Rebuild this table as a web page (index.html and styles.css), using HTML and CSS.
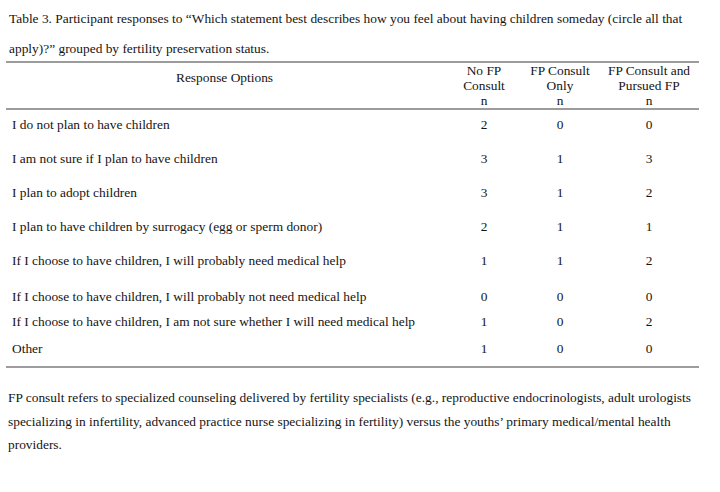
FILE: index.html
```html
<!DOCTYPE html>
<html lang="en">
<head>
<meta charset="utf-8">
<title>Table 3</title>
<link rel="stylesheet" href="styles.css">
</head>
<body>
<div class="page">
  <p class="caption">Table 3. Participant responses to “Which statement best describes how you feel about having children someday (circle all that apply)?” grouped by fertility preservation status.</p>
  <table class="data">
    <thead>
      <tr>
        <th class="opt-head">Response Options</th>
        <th class="num c2">No FP<br>Consult<br>n</th>
        <th class="num c3">FP Consult<br>Only<br>n</th>
        <th class="num c4">FP Consult and<br>Pursued FP<br>n</th>
      </tr>
    </thead>
    <tbody>
      <tr class="r-first"><td class="opt">I do not plan to have children</td><td class="num c2">2</td><td class="num c3">0</td><td class="num c4">0</td></tr>
      <tr class="r-std"><td class="opt">I am not sure if I plan to have children</td><td class="num c2">3</td><td class="num c3">1</td><td class="num c4">3</td></tr>
      <tr class="r-std"><td class="opt">I plan to adopt children</td><td class="num c2">3</td><td class="num c3">1</td><td class="num c4">2</td></tr>
      <tr class="r-std"><td class="opt">I plan to have children by surrogacy (egg or sperm donor)</td><td class="num c2">2</td><td class="num c3">1</td><td class="num c4">1</td></tr>
      <tr class="r-wide"><td class="opt">If I choose to have children, I will probably need medical help</td><td class="num c2">1</td><td class="num c3">1</td><td class="num c4">2</td></tr>
      <tr class="r-short"><td class="opt">If I choose to have children, I will probably not need medical help</td><td class="num c2">0</td><td class="num c3">0</td><td class="num c4">0</td></tr>
      <tr class="r-mid"><td class="opt">If I choose to have children, I am not sure whether I will need medical help</td><td class="num c2">1</td><td class="num c3">0</td><td class="num c4">2</td></tr>
      <tr class="r-mid"><td class="opt">Other</td><td class="num c2">1</td><td class="num c3">0</td><td class="num c4">0</td></tr>
    </tbody>
  </table>
  <p class="note">FP consult refers to specialized counseling delivered by fertility specialists (e.g., reproductive endocrinologists, adult urologists specializing in infertility, advanced practice nurse specializing in fertility) versus the youths’ primary medical/mental health providers.</p>
</div>
</body>
</html>
```

FILE: styles.css
```css
html, body {
  margin: 0;
  padding: 0;
  background: #ffffff;
}

body {
  font-family: "Liberation Serif", "Times New Roman", serif;
  font-size: 13.4px;
  color: #141414;
}

.page {
  width: 720px;
  height: 492px;
  overflow: hidden;
}

.caption {
  margin: 0 0 -3px 9px;
  padding-top: 4px;
  width: 690px;
  line-height: 30px;
}

.data {
  margin-left: 6px;
  width: 689px;
  border-collapse: collapse;
  table-layout: fixed;
}

.data thead tr {
  border-top: 2px solid #9c9c9c;
  border-bottom: 2px solid #9c9c9c;
}

.data th {
  font-weight: normal;
  padding: 0;
  height: 45px;
  vertical-align: top;
  line-height: 15px;
  text-align: center;
}

.data th.opt-head {
  width: 437px;
  height: 38px;
  padding-top: 7px;
}

.data th.c2, .data td.c2 { width: 82px; }
.data th.c3, .data td.c3 { width: 70px; }
.data th.c4, .data td.c4 { width: 100px; padding-left: 4px; }

.data tbody tr:last-child {
  border-bottom: 2px solid #9c9c9c;
}

.data td {
  padding: 0;
  vertical-align: top;
  line-height: 20px;
}

.data td.opt {
  padding-left: 6px;
  text-align: left;
}

.data td.num {
  text-align: center;
}

.r-first td { height: 34px; padding-top: 5px; }
.r-std td { height: 34px; }
.r-wide td { height: 36px; }
.r-short td { height: 25px; }
.r-mid td { height: 27px; }

.note {
  margin: 18px 0 0 8px;
  width: 690px;
  line-height: 23.5px;
}
```
